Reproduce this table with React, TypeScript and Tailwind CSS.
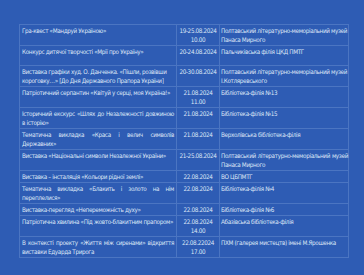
import React from "react";

type Row = {
  a: string;
  d: string[];
  v: string;
  ja?: boolean;
  jv?: boolean;
  two?: boolean;
};

const rows: Row[] = [
  { a: "Гра-квест «Мандруй Україною»", d: ["19-25.08.2024", "10.00"], v: "Полтавський літературно-меморіальний музей Панаса Мирного" },
  { a: "Конкурс дитячої творчості «Мрії про Україну»", d: ["20-24.08.2024"], v: "Пальчиківська філія ЦКД ПМТГ", two: true },
  { a: "Виставка графіки худ. О. Данченка. «Пішли, розвівши короговку…» [До Дня Державного Прапора України]", d: ["20-30.08.2024"], v: "Полтавський літературно-меморіальний музей І.Котляревського" },
  { a: "Патріотичний серпантин «Квітуй у серці, моя Україна!»", d: ["21.08.2024", "11.00"], v: "Бібліотека-філія №13" },
  { a: "Історичний екскурс «Шлях до Незалежності довжиною в історію»", d: ["21.08.2024"], v: "Бібліотека-філія №15", ja: true },
  { a: "Тематична викладка  «Краса і велич символів Державних»", d: ["21.08.2024"], v: "Верхолівська бібліотека-філія", ja: true },
  { a: "Виставка «Національні символи Незалежної України»", d: ["21-25.08.2024"], v: "Полтавський літературно-меморіальний музей Панаса Мирного", jv: true },
  { a: "Виставка – інсталяція «Кольори рідної землі»", d: ["22.08.2024"], v: "ВО ЦБПМТГ" },
  { a: "Тематична викладка «Блакить і золото на нім переплелися»", d: ["22.08.2024"], v: "Бібліотека-філія №4", ja: true },
  { a: "Виставка-перегляд «Непереможність духу»", d: ["22.08.2024"], v: "Бібліотека-філія №6" },
  { a: "Патріотична хвилина «Під жовто-блакитним прапором»", d: ["22.08.2024", "14.00"], v: "Абазівська бібліотека-філія" },
  { a: "В контексті проекту «Життя між сиренами» відкриття виставки Едуарда Трирога", d: ["22.08.22024", "17.00"], v: "ПХМ (галерея мистецтв) імені М.Ярошенка", ja: true },
];

export default function App() {
  return (
    <div
      className="w-[364px] h-[275px] bg-[#2e5cb4] text-[#dde6f6] text-[6.3px] leading-[9px] tracking-[-0.35px] pt-[24px] pl-[19px]"
      style={{ fontFamily: '"DejaVu Sans Condensed", "DejaVu Sans", sans-serif' }}
    >
      <div className="w-[330px] border-t border-l border-r border-[#4b75c2]">
        {rows.map((r, i) => (
          <div key={i} className="grid grid-cols-[157px_43px_128px] border-b border-[#4b75c2]">
            <div className={`px-[2px] py-px border-r border-[#4b75c2] ${r.ja ? "text-justify" : ""} ${r.two ? "min-h-[19px]" : ""}`}>
              {r.a}
            </div>
            <div className="py-px text-center border-r border-[#4b75c2] whitespace-nowrap">
              {r.d.map((x, j) => (
                <div key={j}>{x}</div>
              ))}
            </div>
            <div className={`pl-px pr-0 py-px ${r.jv ? "text-justify" : ""}`}>{r.v}</div>
          </div>
        ))}
      </div>
    </div>
  );
}
